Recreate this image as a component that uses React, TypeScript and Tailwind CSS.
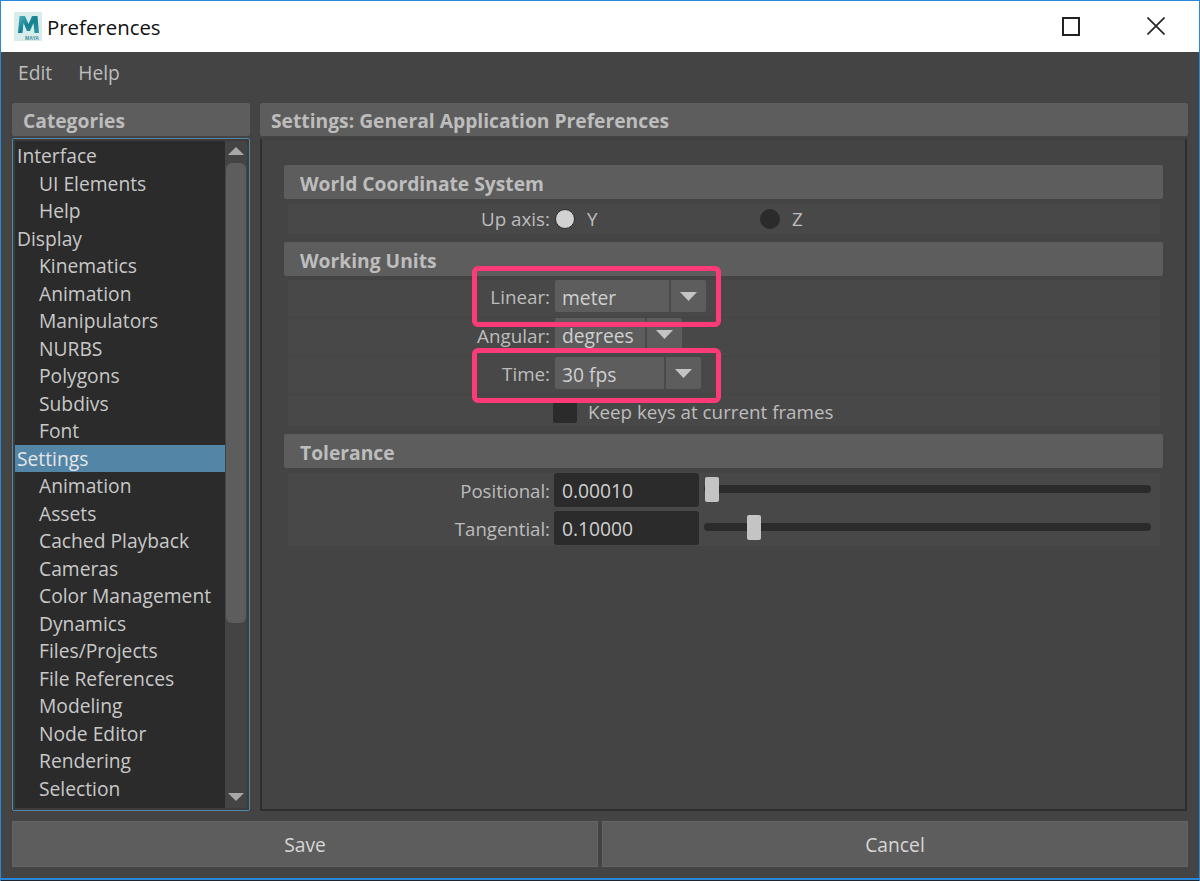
const categories = [
  { label: "Interface", top: true },
  { label: "UI Elements" },
  { label: "Help" },
  { label: "Display", top: true },
  { label: "Kinematics" },
  { label: "Animation" },
  { label: "Manipulators" },
  { label: "NURBS" },
  { label: "Polygons" },
  { label: "Subdivs" },
  { label: "Font" },
  { label: "Settings", top: true, selected: true },
  { label: "Animation" },
  { label: "Assets" },
  { label: "Cached Playback" },
  { label: "Cameras" },
  { label: "Color Management" },
  { label: "Dynamics" },
  { label: "Files/Projects" },
  { label: "File References" },
  { label: "Modeling" },
  { label: "Node Editor" },
  { label: "Rendering" },
  { label: "Selection" },
];

function MayaLogo() {
  return (
    <svg width="28" height="29" viewBox="0 0 28 29" className="shrink-0">
      <defs>
        <linearGradient id="maya-m" x1="0" y1="0" x2="1" y2="1">
          <stop offset="0" stopColor="#4fb0bb" />
          <stop offset="0.5" stopColor="#16808f" />
          <stop offset="1" stopColor="#2a9aa6" />
        </linearGradient>
      </defs>
      <rect width="28" height="29" fill="#d9ecec" />
      <path d="M4 21 L5.5 4 H11 L14.5 12 L18 4 H23.5 L25 21 H20.5 L19.5 11 L16 19 H13 L9.5 11 L8.5 21 Z" fill="url(#maya-m)" />
      <text x="18" y="27.5" textAnchor="middle" fontSize="5" fontWeight="700" fill="#3f8c9a" fontFamily="Liberation Sans">MAYA</text>
    </svg>
  );
}

function SectionHeader({ title }: { title: string }) {
  return (
    <div className="flex h-[34px] items-center rounded-[2px] bg-[#5d5d5d] pt-[3px] pl-4 font-bold text-[#bdbdbd]">
      {title}
    </div>
  );
}

function Dropdown({ value, width }: { value: string; width: string }) {
  return (
    <div className={`flex h-[32px] rounded-[2px] bg-[#5d5d5d] ${width}`}>
      <span className="flex-1 border-r-2 border-[#4d4949] pl-[7px] text-[19.25px] leading-[36px] text-[#cfcfcf]">
        {value}
      </span>
      <span className="flex w-[35px] items-center justify-center">
        <svg width="17" height="9" viewBox="0 0 17 9">
          <path d="M0 0H17L8.5 9Z" fill="#c4c4c4" />
        </svg>
      </span>
    </div>
  );
}

function Radio({ filled }: { filled?: boolean }) {
  return (
    <span
      className={`h-[20px] w-[20px] rounded-full border border-[#2b2b2b] ${filled ? "bg-[#d2d2d2]" : "bg-[#2b2b2b]"}`}
    />
  );
}

function Slider({ value, left }: { value: string; left: string }) {
  return (
    <div className="flex h-[35px] items-start">
      <div className="flex h-[34px] w-[145px] items-center rounded-[3px] bg-[#2b2b2b] pt-[2px] pl-2 text-[19.25px] text-[#cfcfcf]">
        {value}
      </div>
      <div className="relative mt-[12px] ml-[5px] h-[8px] w-[447px] rounded-full bg-[#2b2b2b]">
        <span className={`absolute top-[-8px] h-[25px] w-[14px] rounded-[2px] bg-[#c4c4c4] ${left}`} />
      </div>
    </div>
  );
}

export default function App() {
  return (
    <div
      className="flex h-[881px] w-[1200px] flex-col overflow-hidden border-x border-t border-[#2b88d8] bg-[#444444] text-[19.25px] leading-none"
      style={{ fontFamily: '"Open Sans", "Noto Sans", sans-serif' }}
    >
      <div className="flex h-[51px] shrink-0 items-center bg-white pl-[13px] text-[#111111]">
        <MayaLogo />
        <span className="ml-[5px] pt-[2px] text-[20.4px]">Preferences</span>
        <span className="mr-[19px] mb-[1px] ml-auto h-[19px] w-[18px] border-2 border-[#222222]" />
        <svg width="18" height="18" viewBox="0 0 18 18" className="mr-[34px] mb-[1px] ml-[48px]">
          <path d="M0.5 0.5L17.5 17.5M17.5 0.5L0.5 17.5" stroke="#222222" strokeWidth="1.6" />
        </svg>
      </div>

      <div className="flex h-[51px] shrink-0 items-center gap-[26px] pb-[10px] pl-[17px] text-[#bdbdbd]">
        <span>Edit</span>
        <span>Help</span>
      </div>

      <div className="flex h-[708px] shrink-0 gap-[10px] px-[11px]">
        <div className="flex w-[238px] flex-col gap-[2px]">
          <div className="flex h-[33px] items-center rounded-[2px] bg-[#5d5d5d] pt-[3px] pl-[11px] font-bold text-[#bdbdbd]">
            Categories
          </div>
          <div className="flex h-[673px] rounded-[2px] border border-[#5285a6] bg-[#3c3c3c] p-[2px] pr-0">
            <div className="w-[210px] overflow-hidden bg-[#2b2b2b] pt-[1px] text-[#c8c8c8]">
              {categories.map((c, i) => (
                <div
                  key={i}
                  className={`h-[27.5px] leading-[28.5px] ${c.top ? "pl-[2px]" : "pl-[24px]"} ${c.selected ? "bg-[#5285a6] text-[#e6e6e6]" : ""}`}
                >
                  {c.label}
                </div>
              ))}
            </div>
            <div className="flex w-[22px] flex-col items-center bg-[#444444] pt-[6px] pb-[7px]">
              <svg width="16" height="8" viewBox="0 0 16 8" className="shrink-0">
                <path d="M8 0L16 8H0Z" fill="#a8a8a8" />
              </svg>
              <span className="mt-[8px] h-[460px] w-[20px] shrink-0 rounded-[6px] bg-[#5d5d5d]" />
              <svg width="16" height="8" viewBox="0 0 16 8" className="mt-auto shrink-0">
                <path d="M0 0H16L8 8Z" fill="#a8a8a8" />
              </svg>
            </div>
          </div>
        </div>

        <div className="flex w-[928px] flex-col gap-[2px]">
          <div className="flex h-[33px] items-center rounded-[2px] bg-[#5d5d5d] pt-[3px] pl-[11px] font-bold text-[#bdbdbd]">
            Settings: General Application Preferences
          </div>
          <div className="relative h-[673px] w-[927px] border-2 border-[#2e2e2e] border-t-[#404040] px-[22px] pt-[25px]">
            <SectionHeader title="World Coordinate System" />
            <div className="mt-[5px] mr-[3px] ml-[4px] flex h-[30px] items-center gap-[5px] bg-[#484848] text-[18.8px] text-[#bdbdbd]">
              <span className="w-[262px] text-right">Up axis:</span>
              <Radio filled />
              <span className="ml-[7px] w-[168px]">Y</span>
              <Radio />
              <span className="ml-[7px]">Z</span>
            </div>

            <div className="mt-[8px]">
              <SectionHeader title="Working Units" />
            </div>
            <div className="mt-[4px] mr-[3px] ml-[4px] flex h-[146px] flex-col bg-[#484848] text-[18.8px]">
              <div className="flex h-[38px] gap-[5px] border-b border-[#444444] text-[#bdbdbd]">
                <span className="w-[262px] pt-[8px] text-right">Linear:</span>
                <Dropdown value="meter" width="w-[151px]" />
              </div>
              <div className="flex h-[39px] gap-[5px] border-b border-[#444444] text-[#bdbdbd]">
                <span className="w-[262px] pt-[9px] text-right">Angular:</span>
                <Dropdown value="degrees" width="w-[127px]" />
              </div>
              <div className="flex h-[38px] gap-[5px] border-b border-[#444444] text-[#bdbdbd]">
                <span className="w-[262px] pt-[8px] text-right">Time:</span>
                <Dropdown value="30 fps" width="w-[146px]" />
              </div>
              <div className="flex items-center pt-[7px] pl-[265px] text-[#bdbdbd]">
                <span className="h-[21px] w-[24px] rounded-[2px] bg-[#2b2b2b]" />
                <span className="ml-[11px]">Keep keys at current frames</span>
              </div>
            </div>

            <div className="mt-[8px]">
              <SectionHeader title="Tolerance" />
            </div>
            <div className="mt-[5px] mr-[3px] ml-[4px] flex h-[73px] flex-col gap-[3px] bg-[#484848] text-[18.6px]">
              <div className="flex gap-[4px] text-[#bdbdbd]">
                <span className="w-[262px] pt-[9px] text-right">Positional:</span>
                <Slider value="0.00010" left="left-[1px]" />
              </div>
              <div className="flex gap-[4px] text-[#bdbdbd]">
                <span className="w-[262px] pt-[9px] text-right">Tangential:</span>
                <Slider value="0.10000" left="left-[43px]" />
              </div>
            </div>

            <div className="absolute top-[126px] left-[210px] h-[61px] w-[249px] rounded-[6px] border-[5px] border-[#ff3a78]" />
            <div className="absolute top-[208px] left-[210px] h-[55px] w-[249px] rounded-[6px] border-[5px] border-[#ff3a78]" />
          </div>
        </div>
      </div>

      <div className="mt-[10px] flex h-[46px] shrink-0 gap-[4px] px-[11px] text-[#d6d6d6]">
        <div className="flex w-[586px] items-center justify-center border border-[#636363] bg-[#5d5d5d] pt-[2px]">Save</div>
        <div className="flex w-[586px] items-center justify-center border border-[#636363] bg-[#5d5d5d] pt-[2px]">Cancel</div>
      </div>

      <div className="mt-[11px] h-[2px] shrink-0 bg-[#2b88d8]" />
      <div className="h-[1px] shrink-0 bg-[#1d2530]" />
    </div>
  );
}
